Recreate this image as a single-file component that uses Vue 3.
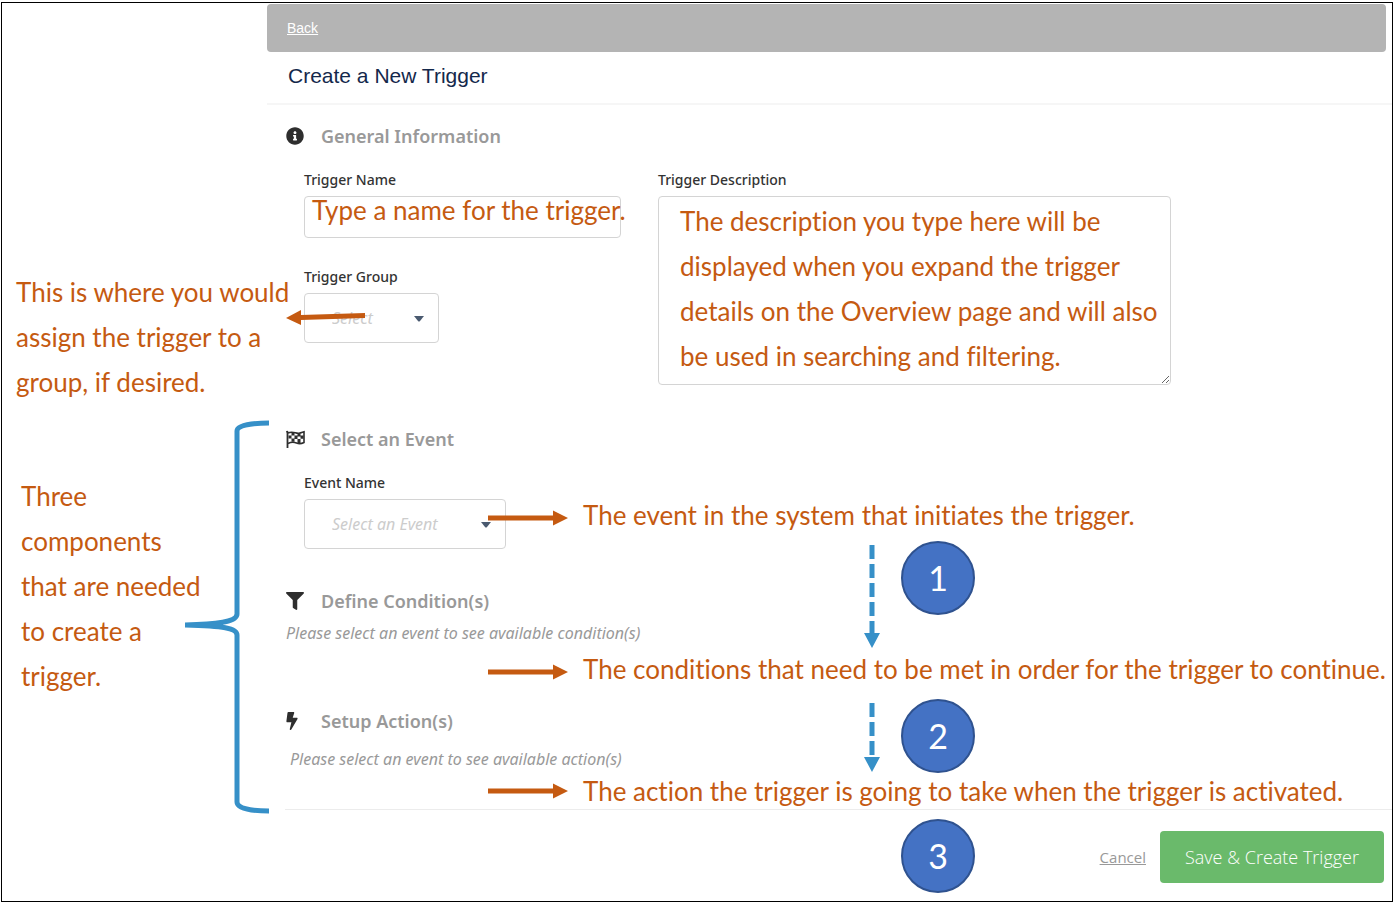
<script setup>
import { ref } from "vue";

const triggerName = ref("");
const triggerGroup = ref("");
const eventName = ref("");

const triggerDescription = ref(
  [
    "The description you type here will be",
    "displayed when you expand the trigger",
    "details on the Overview page and will also",
    "be used in searching and filtering.",
  ].join("\n")
);

const groupNote = ["This is where you would", "assign the trigger to a", "group, if desired."];
const partsNote = ["Three", "components", "that are needed", "to create a", "trigger."];
</script>

<template>
  <div class="frame">
    <aside>
      <p class="note group-note">
        <span v-for="line in groupNote" :key="line">{{ line }}</span>
      </p>
      <div class="parts">
        <p class="note">
          <span v-for="line in partsNote" :key="line">{{ line }}</span>
        </p>
        <svg class="brace" width="84" height="394" viewBox="0 0 84 394">
          <path
            d="M84 3C64 3 52 6 52 11V194C52 201 38 204 0 205C38 206 52 208 52 215V382C52 388 64 391 84 391"
            fill="none"
            stroke="#3690c8"
            stroke-width="5"
          />
        </svg>
      </div>
    </aside>

    <main>
      <nav><a href="#">Back</a></nav>
      <h1>Create a New Trigger</h1>

      <section class="general">
        <h2>
          <svg width="18" height="18" viewBox="0 0 512 512">
            <path
              d="M256 8C119.043 8 8 119.083 8 256c0 136.997 111.043 248 248 248s248-111.003 248-248C504 119.083 392.957 8 256 8zm0 110c23.196 0 42 18.804 42 42s-18.804 42-42 42-42-18.804-42-42 18.804-42 42-42zm56 254c0 6.627-5.373 12-12 12h-88c-6.627 0-12-5.373-12-12v-24c0-6.627 5.373-12 12-12h12v-64h-12c-6.627 0-12-5.373-12-12v-24c0-6.627 5.373-12 12-12h64c6.627 0 12 5.373 12 12v100h12c6.627 0 12 5.373 12 12v24z"
            />
          </svg>
          General Information
        </h2>
        <div class="fields">
          <div class="column">
            <div class="field">
              <label for="name">Trigger Name</label>
              <input id="name" v-model="triggerName" type="text" />
              <span class="note name-note">Type a name for the trigger.</span>
            </div>
            <div class="field">
              <label for="group">Trigger Group</label>
              <div class="select group-select">
                <select id="group" v-model="triggerGroup">
                  <option value="">Select</option>
                </select>
                <svg class="caret" width="10" height="6" viewBox="0 0 10 6">
                  <path d="M0 0H10L6 5Q5 6 4 5Z" />
                </svg>
                <svg class="group-arrow" width="80" height="16" viewBox="0 0 80 16">
                  <path d="M0 9L15 1V6L79 4V9L15 11V16Z" fill="#c55a11" />
                </svg>
              </div>
            </div>
          </div>
          <div class="field description">
            <label for="description">Trigger Description</label>
            <textarea id="description" v-model="triggerDescription"></textarea>
          </div>
        </div>
      </section>

      <section class="event">
        <h2>
          <svg width="20" height="18" viewBox="0 0 20 18">
            <path d="M0 1.5A1.3 1.3 0 0 1 2.4 1.4V18H.6V3Z" />
            <path
              d="M2 3C7 .5 10 4 13 3.200C15 3 16.500 2.200 18 1.800V12.500C15 14 13 14 10.500 13C8 12 5 12 2 13.500"
              fill="none"
              stroke="#2e2e2e"
              stroke-width="1.600"
            />
            <path
              d="M5.500 2.500H8.500V5.500H5.500ZM11.500 3.500H14.500V6.500H11.500ZM2.500 5.500H5.500V8.500H2.500ZM8.500 5.500H11.500V9H8.500ZM14.500 5.500H17.500V8.800H14.500ZM5.500 8.500H8.500V11.800H5.500ZM11.500 9H14.500V13H11.500Z"
            />
          </svg>
          Select an Event
        </h2>
        <div class="event-row">
          <div class="field">
            <label for="event">Event Name</label>
            <div class="select event-select">
              <select id="event" v-model="eventName">
                <option value="">Select an Event</option>
              </select>
              <svg class="caret" width="10" height="6" viewBox="0 0 10 6">
                <path d="M0 0H10L6 5Q5 6 4 5Z" />
              </svg>
            </div>
          </div>
          <p class="note pointer">
            <svg width="80" height="16" viewBox="0 0 80 16">
              <path d="M0 5.500H65V.5L80 8L65 15.500V10.500H0Z" fill="#c55a11" />
            </svg>
            The event in the system that initiates the trigger.
          </p>
        </div>
        <div class="step step-one">
          <svg width="16" height="104" viewBox="0 0 16 104">
            <path d="M8 0V90" stroke="#3690c8" stroke-width="5" stroke-dasharray="14 5" />
            <path d="M0 88H16L8 103Z" fill="#3690c8" />
          </svg>
          <span class="number">1</span>
        </div>
      </section>

      <section class="conditions">
        <h2>
          <svg width="18" height="18" viewBox="0 0 512 512">
            <path
              d="M487.976 0H24.028C2.710 0-8.047 25.866 7.058 40.971L192 225.941V432c0 7.831 3.821 15.170 10.237 19.662l80 55.980C298.020 518.690 320 507.493 320 487.980V225.941l184.947-184.970C520.021 25.896 509.338 0 487.976 0z"
            />
          </svg>
          Define Condition(s)
        </h2>
        <p class="hint">Please select an event to see available condition(s)</p>
        <p class="note pointer">
          <svg width="80" height="16" viewBox="0 0 80 16">
            <path d="M0 5.500H65V.5L80 8L65 15.500V10.500H0Z" fill="#c55a11" />
          </svg>
          The conditions that need to be met in order for the trigger to continue.
        </p>
      </section>

      <section class="actions">
        <h2>
          <svg width="12" height="18" viewBox="0 0 320 512">
            <path
              d="M296 160H180.600l42.600-129.800C227.200 15 215.700 0 200 0H56C44 0 33.800 8.900 32.200 20.800l-32 240C-1.700 275.200 9.500 288 24 288h118.700L96.600 482.500c-3.600 15.200 8 29.500 23.300 29.500 8.400 0 16.400-4.400 20.800-12l176-304c9.300-15.900-2.200-36-20.700-36z"
            />
          </svg>
          Setup Action(s)
        </h2>
        <p class="hint">Please select an event to see available action(s)</p>
        <p class="note pointer">
          <svg width="80" height="16" viewBox="0 0 80 16">
            <path d="M0 5.500H65V.5L80 8L65 15.500V10.500H0Z" fill="#c55a11" />
          </svg>
          The action the trigger is going to take when the trigger is activated.
        </p>
        <div class="step step-two">
          <svg width="16" height="69" viewBox="0 0 16 69">
            <path d="M8 0V54" stroke="#3690c8" stroke-width="5" stroke-dasharray="14 5" />
            <path d="M0 54H16L8 69Z" fill="#3690c8" />
          </svg>
          <span class="number">2</span>
        </div>
      </section>

      <footer>
        <span class="number step-three">3</span>
        <a href="#">Cancel</a>
        <button type="button">Save &amp; Create Trigger</button>
      </footer>
    </main>
  </div>
</template>

<style>
body {
  margin: 0;
  background-color: white;
}
</style>

<style scoped>
* {
  padding: 0;
  margin: 0;
  box-sizing: border-box;
}

.frame {
  display: grid;
  grid-template-columns: 265px 1fr;
  margin: 2px 1px 1px;
  border: 1px solid black;
  font-family: "Noto Sans", sans-serif;
}

.note,
textarea {
  font-family: Lato, sans-serif;
  font-size: 26px;
  font-variant-ligatures: none;
  line-height: 45px;
  color: #c55a11;
  white-space: nowrap;
}

aside .note span {
  display: block;
}

.group-note {
  padding: 267px 0 0 14px;
}

.parts {
  display: flex;
  margin-top: 15px;
}

.parts .note {
  width: 183px;
  padding: 54px 0 0 19px;
}

.brace {
  flex: none;
}

main {
  min-width: 0;
}

nav {
  margin: 1px 6px 0 0;
  padding: 0 20px;
  border-radius: 4px;
  background-color: #b4b4b4;
}

nav a {
  font-family: "Liberation Sans", sans-serif;
  font-size: 14px;
  line-height: 48px;
  color: white;
}

h1 {
  padding: 0 21px 3px;
  border-bottom: 2px solid #f6f6f6;
  font-family: "Liberation Sans", sans-serif;
  font-size: 21px;
  font-weight: 400;
  line-height: 48px;
  color: #14284b;
}

section {
  position: relative;
  padding-left: 19px;
}

.general {
  padding-top: 19px;
}

.event {
  padding-top: 42px;
}

.conditions {
  padding-top: 40px;
}

.actions {
  padding-top: 22px;
}

h2 {
  display: grid;
  grid-template-columns: 35px 1fr;
  align-items: center;
  font-size: 18px;
  font-weight: 600;
  line-height: 24px;
  color: #999;
}

h2 svg {
  fill: #2e2e2e;
}

.fields {
  display: flex;
  gap: 37px;
  padding: 19px 0 0 18px;
}

.column {
  display: flex;
  flex-direction: column;
  gap: 26px;
  width: 317px;
}

.field {
  position: relative;
}

.description {
  width: 513px;
}

label {
  display: block;
  margin-bottom: 3px;
  font-size: 14px;
  font-weight: 500;
  line-height: 26px;
  color: #333;
}

input,
textarea,
select {
  display: block;
  width: 100%;
  border: 1px solid #d4d4d4;
  border-radius: 4px;
  background-color: white;
}

input {
  height: 42px;
  padding: 0 8px;
}

.name-note {
  position: absolute;
  top: 21px;
  left: 8px;
}

textarea {
  height: 189px;
  padding: 2px 21px;
  white-space: pre;
  overflow: hidden;
}

select {
  height: 50px;
  padding-left: 27px;
  appearance: none;
  font-family: "Noto Sans", sans-serif;
  font-size: 16px;
  font-style: italic;
  color: #ccc;
}

.select {
  position: relative;
}

.group-select {
  width: 135px;
}

.event-select {
  width: 202px;
}

.caret {
  position: absolute;
  top: 23px;
  right: 15px;
  fill: #4a5a70;
  pointer-events: none;
}

.group-arrow {
  position: absolute;
  top: 16px;
  left: -18px;
}

.event-row {
  display: flex;
  padding: 19px 0 0 18px;
}

.pointer {
  display: flex;
  align-items: center;
  gap: 15px;
  line-height: 36px;
}

.pointer svg {
  flex: none;
}

.event-row .pointer {
  position: relative;
  align-self: flex-start;
  margin: 27px 0 0 -18px;
}

.event-row .pointer svg,
.conditions .pointer svg {
  margin-top: 5px;
}

.hint {
  font-size: 16px;
  font-style: italic;
  line-height: 24px;
  color: #999;
}

.conditions .hint {
  margin-top: 8px;
}

.conditions .pointer {
  padding: 6px 0 0 202px;
}

.actions .hint {
  padding: 14px 0 0 4px;
}

.actions .pointer {
  padding: 2px 0 0 202px;
}

.step {
  position: absolute;
  left: 597px;
  display: flex;
  gap: 21px;
}

.step-one {
  top: 156px;
}

.step-one svg,
.step-two svg {
  margin-top: 4px;
}

.step-two {
  top: 12px;
}

.number {
  width: 74px;
  height: 74px;
  border: 2px solid #2f528f;
  border-radius: 50%;
  background-color: #4472c4;
  font-family: Lato, sans-serif;
  font-size: 34px;
  line-height: 70px;
  text-align: center;
  color: white;
}

.step-three {
  position: absolute;
  top: 9px;
  left: 616px;
}

footer {
  position: relative;
  display: flex;
  align-items: center;
  justify-content: flex-end;
  gap: 14px;
  margin-left: 18px;
  padding: 21px 8px 18px 0;
  border-top: 1px solid #ececec;
}

footer a {
  font-family: "Open Sans", sans-serif;
  font-size: 15px;
  color: #999;
}

button {
  width: 224px;
  height: 52px;
  border: none;
  border-radius: 4px;
  background-color: #6aba6b;
  font-family: "Open Sans", sans-serif;
  font-size: 18px;
  font-weight: 300;
  color: white;
}
</style>
